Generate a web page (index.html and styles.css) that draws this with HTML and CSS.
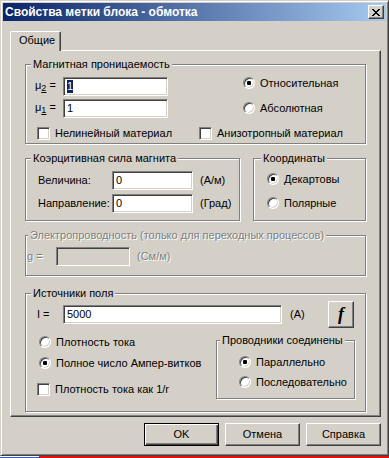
FILE: index.html
```html
<!DOCTYPE html>
<html lang="ru">
<head>
  <meta charset="UTF-8" />
  <title>Свойства метки блока - обмотка</title>
  <link rel="stylesheet" href="styles.css">
</head>
<body>
  <div class="window">
    <div class="titlebar">
      <span class="title">Свойства метки блока - обмотка</span>
      <span class="close">
        <svg width="8" height="7" viewBox="0 0 8 7" shape-rendering="crispEdges"><path d="M0 0h2v1h-2z M6 0h2v1h-2z M1 1h2v1h-2z M5 1h2v1h-2z M2 2h4v1h-4z M3 3h2v1h-2z M2 4h4v1h-4z M1 5h2v1h-2z M5 5h2v1h-2z M0 6h2v1h-2z M6 6h2v1h-2z" fill="#000"/></svg>
      </span>
    </div>

    <div class="client">
      <div class="tabs"><div class="tab">Общие</div></div>

      <div class="sheet">
        <!-- magnetic permeability -->
        <div class="group g-perm">
          <div class="cap"><span>Магнитная проницаемость</span></div>
          <div class="perm-body">
            <div class="perm-fields">
              <div class="field">
                <span class="lbl-mu">μ<span class="mu-sub">2</span> =</span>
                <span class="edit w-mu"><span class="sel">1</span></span>
              </div>
              <div class="field">
                <span class="lbl-mu">μ<span class="mu-sub">1</span> =</span>
                <span class="edit w-mu">1</span>
              </div>
            </div>
            <div class="perm-kind">
              <div class="opt"><span class="radio on"></span>Относительная</div>
              <div class="opt"><span class="radio"></span>Абсолютная</div>
            </div>
          </div>
          <div class="checks">
            <div class="opt opt-nonlin"><span class="check"></span>Нелинейный материал</div>
            <div class="opt"><span class="check"></span>Анизотропный материал</div>
          </div>
        </div>

        <div class="row-mid">
          <div class="group g-coerc">
            <div class="cap"><span>Коэрцитивная сила магнита</span></div>
            <div class="coerc-fields">
              <div class="field">
                <span class="lbl-coerc">Величина:</span>
                <span class="edit w-coerc">0</span>
                <span class="unit">(А/м)</span>
              </div>
              <div class="field">
                <span class="lbl-coerc">Направление:</span>
                <span class="edit w-coerc">0</span>
                <span class="unit">(Град)</span>
              </div>
            </div>
          </div>
          <div class="group g-coord">
            <div class="cap"><span>Координаты</span></div>
            <div class="coord-opts">
              <div class="opt"><span class="radio on"></span>Декартовы</div>
              <div class="opt"><span class="radio"></span>Полярные</div>
            </div>
          </div>
        </div>

        <div class="group g-cond">
          <div class="cap dis"><span>Электропроводность (только для переходных процессов)</span></div>
          <div class="field cond-field">
            <span class="lbl-g dis">g =</span>
            <span class="edit w-g disabled"></span>
            <span class="unit dis">(См/м)</span>
          </div>
        </div>

        <div class="group g-src">
          <div class="cap"><span>Источники поля</span></div>
          <div class="field src-field">
            <span class="lbl-i">I =</span>
            <span class="edit w-i">5000</span>
            <span class="unit unit-a">(A)</span>
            <span class="fbtn">f</span>
          </div>
          <div class="src-body">
            <div class="src-opts">
              <div class="opt"><span class="radio"></span>Плотность тока</div>
              <div class="opt"><span class="radio on"></span>Полное число Ампер-витков</div>
              <div class="opt opt-check"><span class="check"></span>Плотность тока как 1/r</div>
            </div>
            <div class="group g-conn">
              <div class="cap"><span>Проводники соединены</span></div>
              <div class="conn-opts">
                <div class="opt"><span class="radio on"></span>Параллельно</div>
                <div class="opt"><span class="radio"></span>Последовательно</div>
              </div>
            </div>
          </div>
        </div>
      </div>

      <div class="buttons">
        <span class="btn default">OK</span>
        <span class="btn">Отмена</span>
        <span class="btn">Справка</span>
      </div>
    </div>
  </div>
  <div class="desk-edge"><span class="edge-blue"></span><span class="edge-red"></span></div>
</body>
</html>
```

FILE: styles.css
```css
html, body { margin: 0; padding: 0; }
body { width: 389px; height: 458px; overflow: hidden; background: #d4d0c8; font-family: "Liberation Sans", Arial, sans-serif; font-size: 11px; line-height: 13px; color: #000; }

.window { box-sizing: border-box; width: 389px; height: 456px; padding: 2px; border: 1px solid; border-color: #d4d0c8 #404040 #404040 #d4d0c8; box-shadow: inset 1px 1px #fff, inset -1px -1px #808080; background: #d4d0c8; }

.titlebar { height: 18px; display: flex; align-items: center; padding-left: 2px; background: linear-gradient(to right, #0a246a, #a6caf0); }
.title { color: #fff; font-weight: bold; font-size: 12px; }
.close { margin-left: auto; margin-right: 2px; width: 16px; height: 14px; box-sizing: border-box; display: flex; align-items: center; justify-content: center; background: #d4d0c8; border: 1px solid; border-color: #fff #404040 #404040 #fff; box-shadow: inset -1px -1px #808080; }
.close svg { display: block; }

.client { padding: 10px 5px 0 7px; }
.tabs { display: flex; }
.tab { position: relative; z-index: 1; width: 51px; height: 20px; box-sizing: border-box; margin-bottom: -1px; padding: 2px 0 0 8px; background: #d4d0c8; border-left: 1px solid #fff; border-top: 1px solid #fff; border-right: 1px solid #404040; border-radius: 2px 2px 0 0; box-shadow: inset -1px 0 #808080; }

.sheet { box-sizing: border-box; height: 367px; padding: 13px 0 0 14px; border: 1px solid; border-color: #fff #404040 #404040 #fff; box-shadow: inset -1px -1px #808080; }

/* etched group box */
.group { box-sizing: border-box; border: 1px solid #808080; box-shadow: inset 1px 1px #fff, 1px 1px #fff; }
.cap { height: 13px; margin-top: -7px; padding-left: 5px; white-space: nowrap; }
.cap span { display: inline-block; padding: 0 2px; background: #d4d0c8; }
.dis { color: #808080; text-shadow: 1px 1px 0 #fff; }

.field { display: flex; align-items: center; }
.opt { display: flex; align-items: center; white-space: nowrap; }
.opt .radio, .opt .check { margin-right: 5px; }

.edit { box-sizing: border-box; height: 19px; display: flex; align-items: center; padding: 0 3px; background: #fff; border: 1px solid; border-color: #808080 #fff #fff #808080; box-shadow: inset 1px 1px #404040, inset -1px -1px #d4d0c8; white-space: nowrap; }
.edit.disabled { background: #d4d0c8; }
.sel { background: #0a246a; color: #fff; }

.radio { flex: none; width: 12px; height: 12px; box-sizing: border-box; display: flex; align-items: center; justify-content: center; border-radius: 50%; border: 1px solid; border-color: #808080 #fff #fff #808080; background: #fff; box-shadow: inset 1px 1px #404040, inset -1px -1px #d4d0c8; }
.radio.on::after { content: ""; width: 4px; height: 4px; border-radius: 1px; background: #000; }
.check { flex: none; width: 13px; height: 13px; box-sizing: border-box; border: 1px solid; border-color: #808080 #fff #fff #808080; background: #fff; box-shadow: inset 1px 1px #404040, inset -1px -1px #d4d0c8; }

/* magnetic permeability */
.g-perm { width: 341px; padding-bottom: 3px; }
.perm-body { display: flex; align-items: flex-start; padding-left: 9px; }
.perm-fields { display: flex; flex-direction: column; gap: 3px; margin-top: 6px; }
.lbl-mu { width: 28px; }
.mu-sub { font-size: 9px; vertical-align: -2px; text-decoration: underline; }
.w-mu { width: 105px; }
.perm-kind { display: flex; flex-direction: column; gap: 5px; margin: 2px 0 0 75px; }
.perm-kind .opt { height: 20px; }
.checks { display: flex; margin-top: 9px; padding-left: 11px; }
.checks .opt { height: 13px; }
.opt-nonlin { width: 162px; }

/* coercive force + coordinates */
.row-mid { display: flex; gap: 13px; margin-top: 14px; }
.g-coerc { width: 215px; padding-bottom: 7px; }
.coerc-fields { display: flex; flex-direction: column; gap: 4px; margin-top: 6px; padding-left: 12px; }
.lbl-coerc { width: 74px; }
.w-coerc { width: 81px; }
.unit { margin-left: 7px; }
.g-coord { width: 113px; }
.g-coord .cap { padding-left: 7px; }
.coord-opts { display: flex; flex-direction: column; gap: 4px; margin-top: 4px; padding-left: 13px; }
.coord-opts .opt { height: 20px; }

/* conductivity (disabled) */
.g-cond { width: 341px; margin-top: 14px; padding-bottom: 9px; }
.g-cond .cap { padding-left: 2px; }
.cond-field { margin-top: 5px; padding-left: 1px; }
.lbl-g { width: 29px; }
.w-g { width: 74px; }

/* field sources */
.g-src { width: 341px; margin-top: 17px; padding-bottom: 12px; }
.src-field { height: 27px; margin-top: 1px; padding-left: 11px; }
.lbl-i { width: 26px; }
.w-i { width: 219px; }
.unit-a { width: 38px; margin-left: 8px; }
.fbtn { width: 26px; height: 27px; box-sizing: border-box; display: flex; align-items: center; justify-content: center; border: 1px solid; border-color: #fff #404040 #404040 #fff; box-shadow: inset -1px -1px #808080; font-family: "Liberation Serif", serif; font-weight: bold; font-style: italic; font-size: 18px; }
.src-body { display: flex; align-items: flex-start; }
.src-opts { box-sizing: border-box; width: 190px; display: flex; flex-direction: column; gap: 1px; margin-top: 4px; padding-left: 11px; }
.src-opts .opt { height: 20px; }
.src-opts .radio { margin-left: 2px; }
.src-opts .opt-check { height: 13px; margin-top: 9px; }
.g-conn { width: 139px; margin-top: 12px; padding-bottom: 6px; }
.g-conn .cap { padding-left: 3px; }
.conn-opts { display: flex; flex-direction: column; margin-top: 5px; padding-left: 22px; }
.conn-opts .opt { height: 20px; }

/* dialog buttons */
.buttons { display: flex; justify-content: flex-end; gap: 6px; margin-top: 6px; }
.btn { width: 75px; height: 23px; box-sizing: border-box; display: flex; align-items: center; justify-content: center; background: #d4d0c8; border: 1px solid; border-color: #fff #404040 #404040 #fff; box-shadow: inset -1px -1px #808080; }
.btn.default { border-color: #000; box-shadow: inset 1px 1px #fff, inset -1px -1px #404040, inset -2px -2px #808080; }

.desk-edge { display: flex; height: 2px; }
.edge-blue { width: 39px; border-top: 1px solid #fff; background: #2a5bd7; }
.edge-red { flex: 1; background: #e01010; }
```
